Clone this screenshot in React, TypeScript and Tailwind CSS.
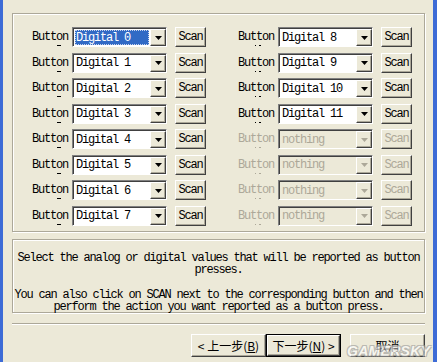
const mono = "font-[family-name:'Liberation_Mono',monospace] text-[12px] tracking-[-1.2px]";
const cjk = "font-[family-name:'Noto_Sans_CJK_SC','Liberation_Sans',sans-serif] text-[12px]";

type RowProps = {
  value: string;
  selected?: boolean;
  disabled?: boolean;
  marks?: "dash" | "dots";
};

function Arrow({ disabled }: { disabled?: boolean }) {
  return (
    <div className="flex h-full w-[16px] items-center justify-center border border-t-white border-l-white border-r-[#404040] border-b-[#404040] bg-[#ece9d8] shadow-[inset_-1px_-1px_0_#aca899]">
      <svg width="7" height="4" viewBox="0 0 7 4">
        <path d="M0 0h7L3.5 4z" fill={disabled ? "#aca899" : "#000"} />
      </svg>
    </div>
  );
}

function Row({ value, selected, disabled, marks = "dash" }: RowProps) {
  const fg = disabled ? "text-[#aca899]" : "text-black";
  const mk = disabled ? "bg-[#aca899]" : "bg-black";
  return (
    <div className="flex h-[20px] items-center">
      <div className={`relative w-[40px] ${mono} ${fg} leading-[20px]`}>
        Button
        {marks === "dash" ? (
          <span className={`absolute left-[25px] top-[18px] h-px w-[4px] ${mk}`} />
        ) : (
          <span className="absolute left-[17px] top-[18px] flex gap-[3px]">
            <span className={`h-px w-px ${mk}`} />
            <span className={`h-px w-[2px] ${mk}`} />
          </span>
        )}
      </div>
      <div
        className={`flex h-[20px] w-[95px] border border-t-[#808080] border-l-[#808080] border-r-white border-b-white shadow-[inset_1px_1px_0_#404040] ${
          disabled ? "bg-[#ece9d8]" : "bg-white"
        } pl-[1px] pt-[1px]`}
      >
        <div className="flex flex-1 items-center p-[1px]">
          <div
            className={`flex h-full flex-1 items-center pl-[1px] ${mono} ${
              selected ? "bg-[#316ac5] text-white outline outline-1 outline-dotted outline-[#c8d4ee] -outline-offset-1" : fg
            }`}
          >
            {value}
          </div>
        </div>
        <Arrow disabled={disabled} />
      </div>
      <div
        className={`ml-[8px] flex h-[20px] w-[31px] items-center justify-center border border-t-white border-l-white border-r-[#404040] border-b-[#404040] shadow-[inset_-1px_-1px_0_#aca899] ${mono} ${fg}`}
      >
        Scan
      </div>
    </div>
  );
}

function WizButton({ children, def }: { children: React.ReactNode; def?: boolean }) {
  return (
    <div className={`h-[23px] w-[75px] ${def ? "border border-black" : ""}`}>
      <div
        className={`flex h-full w-full items-center justify-center border border-t-white border-l-white border-r-[#404040] border-b-[#404040] shadow-[inset_-1px_-1px_0_#aca899] ${cjk} text-black`}
      >
        {children}
      </div>
    </div>
  );
}

export default function App() {
  const left = ["Digital 0", "Digital 1", "Digital 2", "Digital 3", "Digital 4", "Digital 5", "Digital 6", "Digital 7"];
  const right = ["Digital 8", "Digital 9", "Digital 10", "Digital 11"];
  return (
    <div className="relative flex h-[362px] w-[437px] overflow-hidden bg-[#ece9d8]">
      <div className="w-[3px] bg-[#3d6bd6]" />
      <div className="flex flex-1 flex-col pl-[9px] pr-[8px]">
        <div className="mt-[13px] flex h-[219px] gap-[32px] border border-[#aca899] pl-[19px] pt-[13px] shadow-[inset_1px_1px_0_#fff,1px_1px_0_#fff]">
          <div className="flex flex-col gap-[5.5px]">
            {left.map((v, i) => (
              <Row key={v} value={v} selected={i === 0} />
            ))}
          </div>
          <div className="flex flex-col gap-[5.5px]">
            {right.map((v) => (
              <Row key={v} value={v} marks="dots" />
            ))}
            {[0, 1, 2, 3].map((i) => (
              <Row key={i} value="nothing" disabled marks="dots" />
            ))}
          </div>
        </div>

        <div
          className={`mt-[7px] h-[74px] border border-[#aca899] pt-[12px] text-center leading-[12.3px] text-black shadow-[inset_1px_1px_0_#fff,1px_1px_0_#fff] ${mono} whitespace-pre`}
        >
          <div>Select the analog or digital values that will be reported as button</div>
          <div>presses.</div>
          <div className="mt-[12px]">You can also click on SCAN next to the corresponding button and then</div>
          <div>perform the action you want reported as a button press.</div>
        </div>

        <div className="mt-[10px] h-px bg-[#aca899] shadow-[0_1px_0_#fff]" />

        <div className="mt-[10px] flex justify-end">
          <WizButton>
            &lt; 上一步(<span className="underline">B</span>)
          </WizButton>
          <WizButton def>
            下一步(<span className="underline">N</span>) &gt;
          </WizButton>
          <div className="ml-[9px]">
            <WizButton>取消</WizButton>
          </div>
        </div>
      </div>
      <div className="w-[4px] bg-[#3d6bd6]" />

      <div className="pointer-events-none absolute left-[347px] top-[344px] font-[family-name:'Liberation_Sans',sans-serif] text-[14px] font-bold italic leading-[14px] tracking-[0.3px] text-white opacity-60 [text-shadow:1px_1px_0_#9a9a9a,-1px_-1px_0_#9a9a9a,1px_-1px_0_#9a9a9a,-1px_1px_0_#9a9a9a]">
        GAMERSKY
      </div>
    </div>
  );
}
